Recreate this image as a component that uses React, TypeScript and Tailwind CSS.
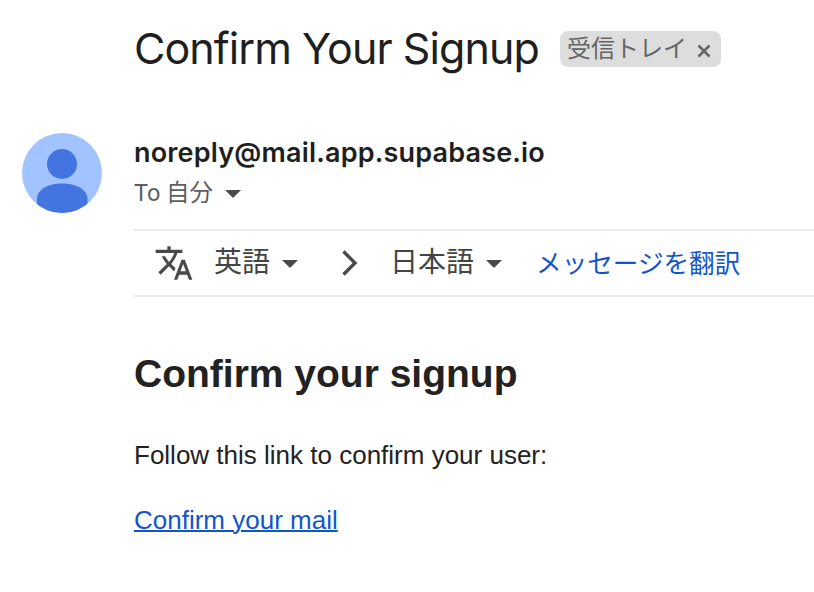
import React from 'react';

const FROM = 'noreply@mail.app.supabase.io';

function Avatar() {
  return (
    <svg viewBox="0 0 80 80" className="h-20 w-20 shrink-0">
      <defs>
        <clipPath id="avatar-clip">
          <circle cx="40" cy="40" r="40" />
        </clipPath>
      </defs>
      <circle cx="40" cy="40" r="40" fill="#a1c3ff" />
      <g clipPath="url(#avatar-clip)" fill="#4374e0">
        <circle cx="40" cy="31" r="15" />
        <path d="M15 80V66c0-10 12-15.500 25-15.500S65.500 56 65.500 66v14z" />
      </g>
    </svg>
  );
}

function Caret() {
  return (
    <svg viewBox="0 0 16 8" className="mt-0.5 h-2 w-4 shrink-0" fill="#4a4a4a">
      <path d="M0 0h16L8 8z" />
    </svg>
  );
}

export default function App() {
  return (
    <div className="h-[592px] w-[814px] overflow-hidden bg-white pl-[22px] font-['Liberation_Sans','Noto_Sans_CJK_JP',sans-serif] text-[#222222]">
      {/* Subject line */}
      <header className="flex h-[98px] items-center pl-[112px]">
        <h1 className="w-[426px] shrink-0 whitespace-nowrap pb-0.5 font-['Inter','Noto_Sans_CJK_JP',sans-serif] text-[43px] font-normal leading-none tracking-[-0.93px] text-[#1f1f1f]">
          Confirm Your Signup
        </h1>
        <span className="flex h-9 w-[161px] items-center gap-[11px] rounded-lg bg-[#dddddd] pl-[7px] text-[#666666]">
          <span className="w-[119px] whitespace-nowrap text-2xl leading-none">受信トレイ</span>
          <svg viewBox="0 0 14 14" className="mt-[3px] h-3.5 w-3.5 shrink-0" stroke="#666666" strokeWidth="2.600">
            <path d="M1.500 1.500l11 11M12.500 1.500l-11 11" />
          </svg>
        </span>
      </header>

      {/* Sender */}
      <section className="flex gap-8 pt-[35px]">
        <Avatar />
        <div className="pt-1">
          <p className="whitespace-nowrap font-['Inter',sans-serif] text-[27px] font-semibold leading-8 tracking-[0.18px] text-[#1f1f1f]">{FROM}</p>
          <p className="flex items-center gap-3 pt-2 font-['Roboto','Noto_Sans_CJK_JP',sans-serif] text-[23.500px] leading-8 text-[#5e5e5e]">
            To 自分
            <Caret />
          </p>
        </div>
      </section>

      {/* Translation bar */}
      <nav className="mt-4 ml-[112px] flex h-[68px] items-center border-y-2 border-[#eceded] pl-5 text-[28px] leading-none text-[#444444]">
        <svg viewBox="0 0 24 24" className="mr-5 h-10 w-10" fill="#4a4a4a">
          <path d="M12.870 15.070l-2.540-2.510.03-.03A17.520 17.520 0 0 0 14.070 6H17V4h-7V2H8v2H1v1.990h11.170C11.500 7.920 10.440 9.750 9 11.350 8.070 10.320 7.300 9.190 6.690 8h-2c.73 1.630 1.730 3.170 2.980 4.560l-5.090 5.020L4 19l5-5 3.110 3.110.76-2.040zM18.500 10h-2L12 22h2l1.120-3h4.750L21 22h2l-4.500-12zm-2.620 7l1.620-4.330L19.120 17h-3.240z" />
        </svg>
        <span className="mr-3">英語</span>
        <Caret />
        <svg viewBox="0 0 16 26" className="mr-8 ml-11 h-[26px] w-4" fill="none" stroke="#4a4a4a" strokeWidth="3.400">
          <path d="M1.500 1.500L13 13 1.500 24.500" />
        </svg>
        <span className="mr-3">日本語</span>
        <Caret />
        <a className="ml-[34px] pt-[3px] text-[25.600px] text-[#1155cc]">メッセージを翻訳</a>
      </nav>

      {/* Message body */}
      <main className="pl-[112px]">
        <h2 className="pt-[55px] text-[39px] font-bold leading-[44px]">Confirm your signup</h2>
        <p className="pt-11 text-[26px] leading-[30px]">Follow this link to confirm your user:</p>
        <a className="mt-[35px] block text-[26px] leading-[30px] text-[#1155cc] underline decoration-2">Confirm your mail</a>
      </main>
    </div>
  );
}
